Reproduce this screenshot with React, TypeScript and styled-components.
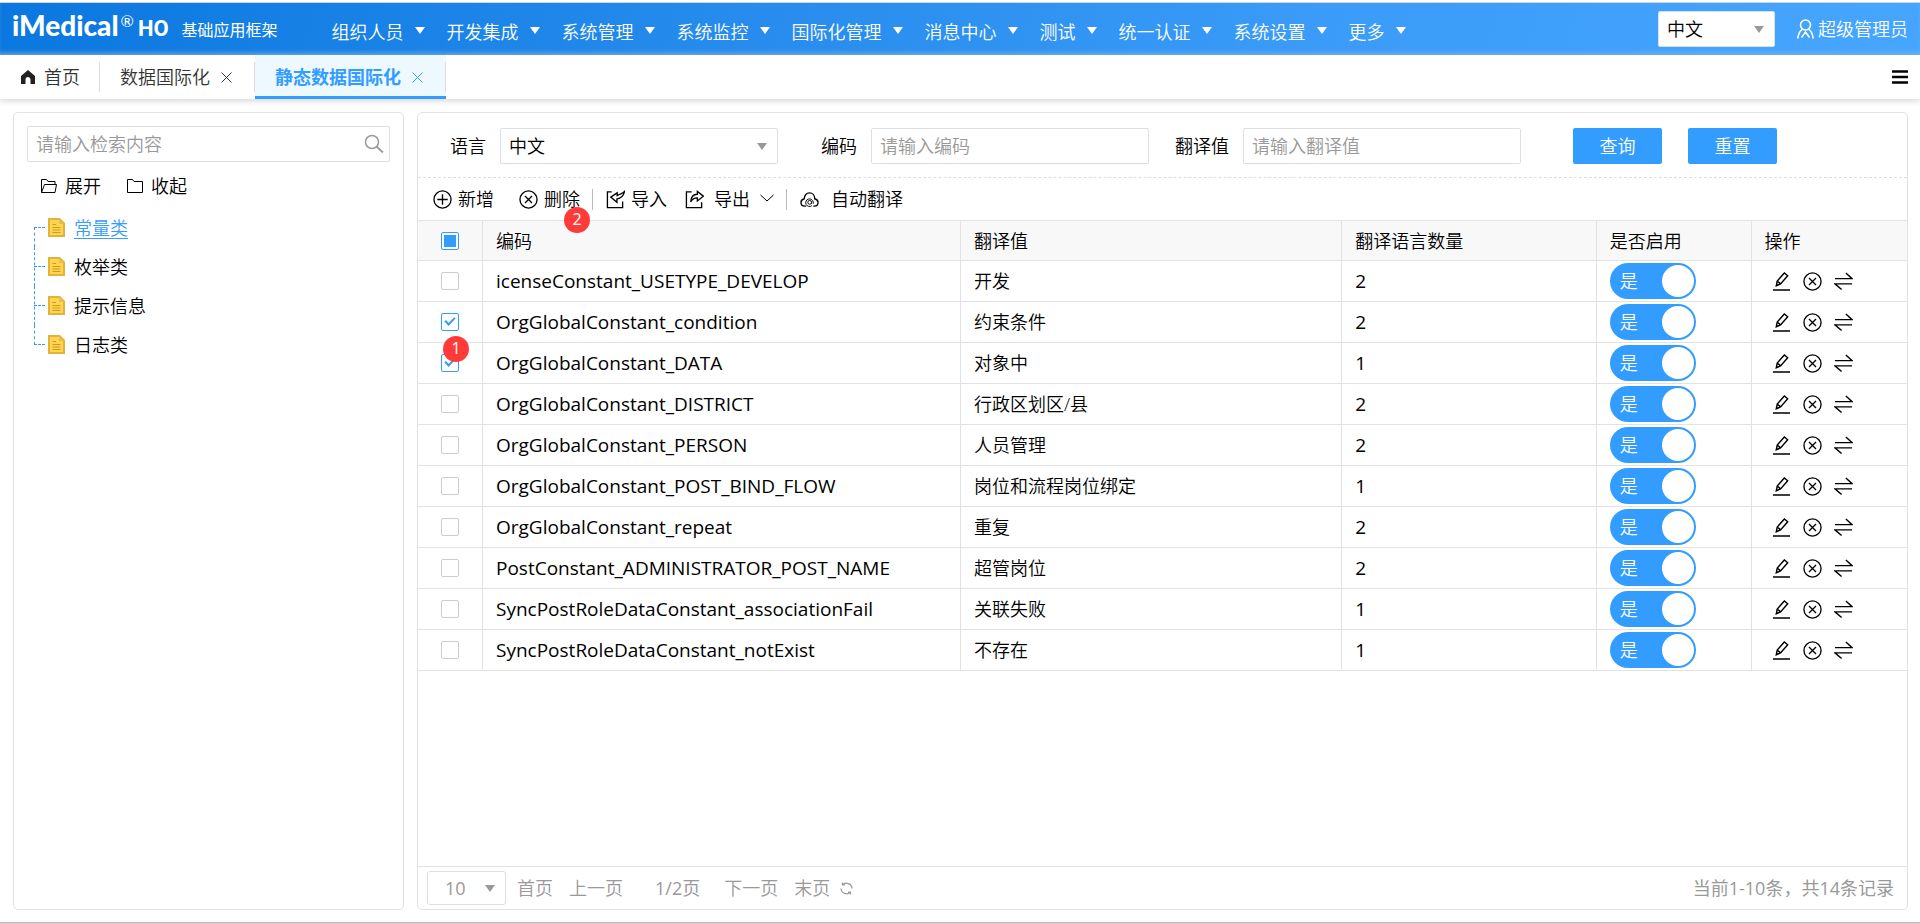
import React, { useEffect, useRef, useState } from "react";
import styled, { createGlobalStyle, css } from "styled-components";

const blue = "#339dff";
const line = "#e2e2e2";

const GlobalStyle = createGlobalStyle`
  *, *::before, *::after { box-sizing: border-box; }
  body { margin: 0; background: #fff; }
  body, button, input, select {
    font-family: "Open Sans", "Noto Sans CJK SC", sans-serif;
    font-size: 18px;
    font-weight: 350;
    line-height: 24px;
    color: #000;
  }
  button { padding: 0; border: 0; background: none; cursor: pointer; }
  a { color: inherit; text-decoration: none; }
  svg { display: block; flex: none; }
`;

const Page = styled.div`
  display: flex;
  flex-direction: column;
  min-height: 100vh;
  padding-top: 2px;
  border-bottom: 1px solid #adc2c2;
`;

const Header = styled.header`
  display: flex;
  align-items: center;
  height: 53px;
  padding: 0 12px;
  border-top: 1px solid #d5d5d5;
  color: #fff;
  background: linear-gradient(100deg, #0a78e0 0%, #1f86e9 28%, #3a9bf8 68%, #46a6ff 100%);
  box-shadow: inset 0 -4px 4px -2px rgba(150, 190, 230, 0.7);
`;

const Brand = styled.a`
  display: flex;
  align-items: baseline;
  margin-bottom: 4px;
  white-space: nowrap;
`;
const BrandName = styled.span`
  font: 900 28px/32px Lato, sans-serif;
`;
const BrandMark = styled.span`
  align-self: flex-start;
  margin: 0 4px 0 2px;
  font: 16px/24px Lato, sans-serif;
`;
const BrandSuffix = styled.span`
  font: 700 22px/32px Roboto, sans-serif;
`;
const BrandTitle = styled.span`
  margin-left: 13px;
  font-size: 16px;
  font-weight: 400;
`;

const Menu = styled.nav`
  display: flex;
  flex: 1;
  gap: 22px;
  margin-left: 54px;
  padding-top: 6px;
`;
const MenuItem = styled.button`
  display: flex;
  align-items: center;
  gap: 11px;
  color: #fff;
  white-space: nowrap;
`;

const Caret = styled.span`
  border: 5px solid transparent;
  border-top: 7px solid currentColor;
  border-bottom: 0;
  pointer-events: none;
`;
const MenuCaret = styled(Caret)`
  margin-bottom: 4px;
`;

const SelectWrap = styled.span<{ $width: number }>`
  position: relative;
  display: block;
  width: ${(p) => p.$width}px;
  & > ${Caret} {
    position: absolute;
    right: 11px;
    top: calc(50% - 3px);
    color: #999;
  }
`;
const field = css`
  width: 100%;
  height: 36px;
  padding: 0 8px;
  border: 1px solid #dcdfe6;
  border-radius: 2px;
  background: #fff;
  outline: none;
`;
const Select = styled.select<{ $muted?: boolean }>`
  ${field}
  display: block;
  appearance: none;
  ${(p) => p.$muted && "height: 34px; padding-left: 17px; color: #999; font-weight: 400; border-radius: 3px;"}
`;
const TextInput = styled.input`
  ${field}
  &::placeholder { color: #999; opacity: 1; }
`;

const User = styled.button`
  display: flex;
  align-items: center;
  gap: 4px;
  margin-left: 22px;
  color: #fff;
  white-space: nowrap;
`;

const Tabs = styled.nav`
  display: flex;
  align-items: center;
  height: 44px;
  padding-right: 12px;
  box-shadow: 0 2px 6px rgba(0, 0, 0, 0.16);
`;
const Tab = styled.div<{ $active?: boolean }>`
  display: flex;
  align-items: center;
  gap: 11px;
  height: 44px;
  padding: 0 23px 0 20px;
  color: #333;
  white-space: nowrap;
  position: relative;
  &::after {
    content: "";
    position: absolute;
    right: 0;
    top: 7px;
    height: 30px;
    border-right: 1px solid #ddd;
  }
  ${(p) =>
    p.$active &&
    css`
      color: ${blue};
      font-weight: 700;
      background: #edf8ff;
      box-shadow: inset 0 -3px ${blue};
    `}
`;
const HomeTab = styled(Tab)`
  gap: 9px;
  padding: 0 20px 0 21px;
`;
const CloseButton = styled.button`
  color: inherit;
`;
const TabMenu = styled.button`
  margin-left: auto;
`;

const Content = styled.main`
  display: flex;
  flex: 1;
  gap: 13px;
  padding: 13px 12px 12px 13px;
`;
const Panel = styled.section`
  display: flex;
  flex-direction: column;
  border: 1px solid ${line};
  border-radius: 5px;
`;
const SidePanel = styled(Panel)`
  flex: 0 0 391px;
  padding: 13px;
`;
const MainPanel = styled(Panel)`
  flex: 1;
  min-width: 0;
`;

const Search = styled.label`
  position: relative;
  svg { position: absolute; right: 6px; top: 8px; }
`;
const TreeActions = styled.div`
  display: flex;
  gap: 26px;
  padding: 12px 14px 10px;
`;
const IconButton = styled.button`
  display: flex;
  align-items: center;
  gap: 8px;
  white-space: nowrap;
`;

const Tree = styled.ul`
  margin: 0 0 0 7px;
  padding: 0;
  list-style: none;
`;
const TreeItem = styled.li`
  position: relative;
  display: flex;
  align-items: center;
  gap: 9px;
  height: 39px;
  padding-left: 14px;
  &::before, &::after { content: ""; position: absolute; left: 0; }
  &::before { top: 0; bottom: 0; border-left: 1px dashed ${blue}; }
  &:first-child::before { top: 19px; }
  &:last-child::before { bottom: 19px; }
  &::after { top: 19px; width: 11px; border-top: 1px dashed ${blue}; }
`;
const TreeLink = styled.a<{ $active: boolean }>`
  ${(p) => p.$active && `color: ${blue}; text-decoration: underline; text-underline-offset: 3px;`}
`;

const Filters = styled.form`
  display: flex;
  align-items: center;
  padding: 15px 32px 13px;
  border-bottom: 1px dashed #ddd;
`;
const Field = styled.label`
  display: flex;
  align-items: center;
  gap: 14px;
  white-space: nowrap;
  & + & { margin-left: 43px; }
  & + &:nth-child(3) { margin-left: 26px; }
  ${TextInput} { width: 278px; }
`;
const PrimaryButton = styled.button`
  width: 89px;
  height: 36px;
  margin-left: 26px;
  border-radius: 2px;
  color: #fff;
  background: ${blue};
  ${Field} + & { margin-left: 52px; }
`;

const Toolbar = styled.div`
  display: flex;
  align-items: center;
  height: 42px;
  padding: 0 15px;
`;
const ToolButton = styled(IconButton)<{ $gap?: number }>`
  position: relative;
  gap: ${(p) => p.$gap ?? 6}px;
`;
const ToolGroup = styled.div<{ $gap: number }>`
  display: flex;
  gap: ${(p) => p.$gap}px;
  padding-right: 12px;
  & + & { padding-left: 13px; border-left: 1px solid #bbb; height: 21px; align-items: center; }
`;

const Badge = styled.span`
  position: absolute;
  z-index: 1;
  width: 26px;
  height: 26px;
  border-radius: 50%;
  font-size: 16px;
  font-weight: 400;
  line-height: 25px;
  text-align: center;
  color: #fff;
  background: #ff3b3a;
`;
const DeleteBadge = styled(Badge)`
  right: -10px;
  top: 20px;
`;
const RowBadge = styled(Badge)`
  left: 25px;
  top: -7px;
`;

const Table = styled.table`
  width: 100%;
  table-layout: fixed;
  border-collapse: separate;
  border-spacing: 0;
  border-top: 1px solid ${line};
`;
const cell = css`
  height: 41px;
  padding: 0 13px;
  border-bottom: 1px solid ${line};
  border-right: 1px solid ${line};
  text-align: left;
  font-weight: inherit;
  white-space: nowrap;
  &:last-child { border-right: 0; }
`;
const Th = styled.th`
  ${cell}
  height: 40px;
  background: #f8f8f8;
`;
const Td = styled.td`
  ${cell}
`;
const LatinTd = styled(Td)`
  font-size: 19px;
  font-weight: 400;
`;
const CheckTh = styled(Th)`
  padding: 0 23px;
`;
const CheckTd = styled(Td)`
  position: relative;
  padding: 0 23px;
`;
const Col = styled.col<{ $width: string }>`
  width: ${(p) => p.$width};
`;

const Checkbox = styled.input`
  appearance: none;
  display: block;
  width: 18px;
  height: 18px;
  margin: 0;
  border: 1px solid #ccc;
  border-radius: 2px;
  background: #fff;
  &:checked, &:indeterminate { border-color: ${blue}; }
  &:checked::before {
    content: "";
    display: block;
    width: 10px;
    height: 6px;
    margin: 3px;
    border: solid ${blue};
    border-width: 0 0 2px 2px;
    transform: rotate(-45deg);
  }
  &:indeterminate::before {
    content: "";
    display: block;
    width: 12px;
    height: 12px;
    margin: 2px;
    border: 0;
    background: ${blue};
    transform: none;
  }
`;

const Switch = styled.label`
  position: relative;
  display: flex;
  align-items: center;
  width: 86px;
  height: 36px;
  padding: 0 2px 0 10px;
  border-radius: 18px;
  justify-content: space-between;
  color: #fff;
  background: #bbb;
  &:has(input:checked) { background: ${blue}; }
  input {
    position: absolute;
    inset: 0;
    margin: 0;
    opacity: 0;
  }
  &::after {
    content: "";
    width: 32px;
    height: 32px;
    border-radius: 50%;
    background: #fff;
  }
`;
const RowActions = styled.div`
  display: flex;
  gap: 12px;
  padding-left: 7px;
`;

const Pager = styled.footer`
  display: flex;
  align-items: center;
  height: 43px;
  margin-top: auto;
  padding: 0 13px 0 9px;
  border-top: 1px solid ${line};
  color: #999;
  white-space: nowrap;
`;
const PagerButton = styled.button`
  margin-left: 16px;
  color: #999;
  ${SelectWrap} + & { margin-left: 11px; }
`;
const RefreshButton = styled(PagerButton)`
  margin-left: 10px;
`;
const PagerText = styled.span`
  margin: 0 8px 0 32px;
  font-weight: 400;
`;
const Total = styled.span`
  margin-left: auto;
  font-weight: 400;
`;

type GlyphProps = { size?: number; stroke?: number; box?: number; children: React.ReactNode };
const Glyph = ({ size = 19, stroke = 1.4, box = 20, children }: GlyphProps) => (
  <svg width={size} height={size} viewBox={`0 0 ${box} ${box}`} fill="none" stroke="currentColor" strokeWidth={stroke} aria-hidden="true">
    {children}
  </svg>
);

const CloseIcon = () => <Glyph size={11} box={11} stroke={1}><path d="M.5.5l10 10M10.5.5l-10 10" /></Glyph>;
const HomeIcon = () => (
  <svg width="14" height="14" viewBox="0 0 14 14" fill="#222" aria-hidden="true">
    <path d="M7 0l7 6v8H9.500V9.500a2.500 2.500 0 00-5 0V14H0V6z" />
  </svg>
);
const MenuIcon = () => (
  <svg width="16" height="14" viewBox="0 0 16 14" aria-hidden="true">
    <path d="M0 1.500h16M0 7h16M0 12.500h16" stroke="#000" strokeWidth="2.600" />
  </svg>
);
const UserIcon = () => (
  <svg width="17" height="20" viewBox="0 0 17 20" fill="none" stroke="currentColor" strokeWidth="1.600" aria-hidden="true">
    <circle cx="8.500" cy="6" r="5" />
    <path d="M5.500 10C2.500 12.500 1 15 1 19.500M11.500 10C14.500 12.500 16 15 16 19.500M4.500 18.500l4-5.500 4 5.500" />
  </svg>
);
const SearchIcon = () => <Glyph size={20} stroke={1.5}><circle cx="8" cy="8" r="6.500" stroke="#999" /><path d="M12.500 12.500l6.500 6" stroke="#999" strokeWidth="1.800" /></Glyph>;
const OpenFolderIcon = () => (
  <svg width="16" height="14" viewBox="0 0 16 14" fill="none" stroke="#000" aria-hidden="true">
    <path d="M.5 13.500v-13h5l1.500 2h7v3M.5 13.500l3-8h12l-1.500 8z" />
  </svg>
);
const FolderIcon = () => (
  <svg width="16" height="14" viewBox="0 0 16 14" fill="none" stroke="#000" aria-hidden="true">
    <path d="M.5.500h5l1.500 2h8.500v11H.5z" />
  </svg>
);
const FileIcon = () => (
  <svg width="17" height="19" viewBox="0 0 17 19" aria-hidden="true">
    <path d="M1 1h10.500L16 5.500V18H1z" fill="#ffd54f" stroke="#e3b23c" strokeWidth="2" />
    <path d="M11 1v5h5" fill="#e8bf4a" />
    <path d="M4.500 6.500H8M4.500 9.500h8M4.500 12h8M4.500 14.500h8" stroke="#c99a1e" strokeWidth="1.200" />
  </svg>
);
const PlusCircleIcon = () => <Glyph><circle cx="10" cy="10" r="9" /><path d="M10 4.500v11M4.500 10h11" /></Glyph>;
const CrossCircleIcon = () => <Glyph><circle cx="10" cy="10" r="9" /><path d="M6.300 6.300l7.400 7.400M13.700 6.300l-7.400 7.400" /></Glyph>;
const ImportIcon = () => <Glyph><path d="M6 2H1.500v16.500h16V12M19.500 1.500C18.500 2.500 17 3.500 14.500 4.500L11.800 6V3L5 7.500l6.500 5.500V9.500C15.500 9 18.500 6.500 19.500 1.500z" /></Glyph>;
const ExportIcon = () => <Glyph><path d="M7 2H1.500v16.500h16V13M6 12.500c.3-5 3-8 7-8V1.500L19.300 6.500 13 11.500V8.300C10 8.300 7.500 9.500 6 12.500z" /></Glyph>;
const ChevronIcon = () => <Glyph size={14} box={14} stroke={1}><path d="M.5 3l6.500 6 6.500-6" /></Glyph>;
const CloudIcon = () => (
  <Glyph>
    <path d="M6.500 17H5C2.500 17 1 15.500 1 13.200c0-2 1.500-3.500 3.500-4C4.500 5.500 7 3 10 3s5.500 2.500 5.500 6.200c2 .5 3.500 2 3.500 4 0 2.300-1.500 3.800-4 3.800h-1" />
    <path d="M12.500 16.500a4 4 0 111.500-3.500v1.500M12.200 13a2 2 0 11-4 0 2 2 0 014 0v1.500" strokeWidth="1" />
  </Glyph>
);
const PencilIcon = () => <Glyph stroke={1.5}><path d="M4.500 14.500l1-5 7.500-8.500 3.500 3L9 12.500zM5.500 9.500L9 12.500M1 19h18" /></Glyph>;
const SwapIcon = () => <Glyph stroke={1.5}><path d="M1 7h18L12.500 1M19 12.500H1l7 6" /></Glyph>;
const RefreshIcon = () => <Glyph size={13} box={13} stroke={1.2}><path d="M2.500 3A5.500 5.500 0 0112 6.500M10.500 10A5.500 5.500 0 011 6.500M2.500.5V3H5M10.500 12.500V10H8" /></Glyph>;

const menu = ["组织人员", "开发集成", "系统管理", "系统监控", "国际化管理", "消息中心", "测试", "统一认证", "系统设置", "更多"];
const tree = ["常量类", "枚举类", "提示信息", "日志类"];
const rows: [string, string, number, boolean][] = [
  ["icenseConstant_USETYPE_DEVELOP", "开发", 2, false],
  ["OrgGlobalConstant_condition", "约束条件", 2, true],
  ["OrgGlobalConstant_DATA", "对象中", 1, true],
  ["OrgGlobalConstant_DISTRICT", "行政区划区/县", 2, false],
  ["OrgGlobalConstant_PERSON", "人员管理", 2, false],
  ["OrgGlobalConstant_POST_BIND_FLOW", "岗位和流程岗位绑定", 1, false],
  ["OrgGlobalConstant_repeat", "重复", 2, false],
  ["PostConstant_ADMINISTRATOR_POST_NAME", "超管岗位", 2, false],
  ["SyncPostRoleDataConstant_associationFail", "关联失败", 1, false],
  ["SyncPostRoleDataConstant_notExist", "不存在", 1, false],
];

export default function App() {
  const [checked, setChecked] = useState(rows.map((r) => r[3]));
  const allRef = useRef<HTMLInputElement>(null);
  const all = checked.every(Boolean);
  const some = checked.some(Boolean) && !all;
  useEffect(() => {
    if (allRef.current) allRef.current.indeterminate = some;
  }, [some]);

  return (
    <Page>
      <GlobalStyle />
      <Header>
        <Brand href="#">
          <BrandName>iMedical</BrandName>
          <BrandMark>®</BrandMark>
          <BrandSuffix>HO</BrandSuffix>
          <BrandTitle>基础应用框架</BrandTitle>
        </Brand>
        <Menu>
          {menu.map((m) => (
            <MenuItem key={m}>{m}<MenuCaret /></MenuItem>
          ))}
        </Menu>
        <SelectWrap $width={117}>
          <Select aria-label="界面语言"><option>中文</option></Select>
          <Caret />
        </SelectWrap>
        <User><UserIcon />超级管理员</User>
      </Header>
      <Tabs>
        <HomeTab><HomeIcon /><a href="#home">首页</a></HomeTab>
        <Tab><a href="#data">数据国际化</a><CloseButton aria-label="关闭"><CloseIcon /></CloseButton></Tab>
        <Tab $active><a href="#static">静态数据国际化</a><CloseButton aria-label="关闭"><CloseIcon /></CloseButton></Tab>
        <TabMenu aria-label="菜单"><MenuIcon /></TabMenu>
      </Tabs>
      <Content>
        <SidePanel>
          <Search>
            <TextInput aria-label="检索" placeholder="请输入检索内容" />
            <SearchIcon />
          </Search>
          <TreeActions>
            <IconButton><OpenFolderIcon />展开</IconButton>
            <IconButton><FolderIcon />收起</IconButton>
          </TreeActions>
          <Tree>
            {tree.map((t, i) => (
              <TreeItem key={t}><FileIcon /><TreeLink href="#" $active={i === 0}>{t}</TreeLink></TreeItem>
            ))}
          </Tree>
        </SidePanel>
        <MainPanel>
          <Filters onSubmit={(e) => e.preventDefault()}>
            <Field>语言
              <SelectWrap $width={278}><Select><option>中文</option></Select><Caret /></SelectWrap>
            </Field>
            <Field>编码<TextInput placeholder="请输入编码" /></Field>
            <Field>翻译值<TextInput placeholder="请输入翻译值" /></Field>
            <PrimaryButton type="submit">查询</PrimaryButton>
            <PrimaryButton type="reset">重置</PrimaryButton>
          </Filters>
          <Toolbar>
            <ToolGroup $gap={25}>
              <ToolButton><PlusCircleIcon />新增</ToolButton>
              <ToolButton><CrossCircleIcon />删除<DeleteBadge>2</DeleteBadge></ToolButton>
            </ToolGroup>
            <ToolGroup $gap={18}>
              <ToolButton><ImportIcon />导入</ToolButton>
              <ToolButton $gap={10}><ExportIcon /><span>导出</span><ChevronIcon /></ToolButton>
            </ToolGroup>
            <ToolGroup $gap={0}>
              <ToolButton $gap={12}><CloudIcon />自动翻译</ToolButton>
            </ToolGroup>
          </Toolbar>
          <Table>
            <colgroup>
              <Col $width="65px" /><Col $width="32.1%" /><Col $width="25.6%" />
              <Col $width="17.1%" /><Col $width="10.4%" /><Col $width="auto" />
            </colgroup>
            <thead>
              <tr>
                <CheckTh>
                  <Checkbox ref={allRef} type="checkbox" aria-label="全选" checked={all} onChange={() => setChecked(rows.map(() => !all))} />
                </CheckTh>
                <Th>编码</Th><Th>翻译值</Th><Th>翻译语言数量</Th><Th>是否启用</Th><Th>操作</Th>
              </tr>
            </thead>
            <tbody>
              {rows.map(([code, value, count], i) => (
                <tr key={code}>
                  <CheckTd>
                    <Checkbox type="checkbox" aria-label={code} checked={checked[i]} onChange={() => setChecked(checked.map((c, j) => (j === i ? !c : c)))} />
                    {i === 2 && <RowBadge>1</RowBadge>}
                  </CheckTd>
                  <LatinTd>{code}</LatinTd>
                  <Td>{value}</Td>
                  <LatinTd>{count}</LatinTd>
                  <Td><Switch><input type="checkbox" role="switch" defaultChecked />是</Switch></Td>
                  <Td>
                    <RowActions>
                      <button aria-label="编辑"><PencilIcon /></button>
                      <button aria-label="删除"><CrossCircleIcon /></button>
                      <button aria-label="切换"><SwapIcon /></button>
                    </RowActions>
                  </Td>
                </tr>
              ))}
            </tbody>
          </Table>
          <Pager>
            <SelectWrap $width={79}><Select $muted aria-label="每页条数"><option>10</option></Select><Caret /></SelectWrap>
            <PagerButton>首页</PagerButton>
            <PagerButton>上一页</PagerButton>
            <PagerText>1/2页</PagerText>
            <PagerButton>下一页</PagerButton>
            <PagerButton>末页</PagerButton>
            <RefreshButton aria-label="刷新"><RefreshIcon /></RefreshButton>
            <Total>当前1-10条，共14条记录</Total>
          </Pager>
        </MainPanel>
      </Content>
    </Page>
  );
}
